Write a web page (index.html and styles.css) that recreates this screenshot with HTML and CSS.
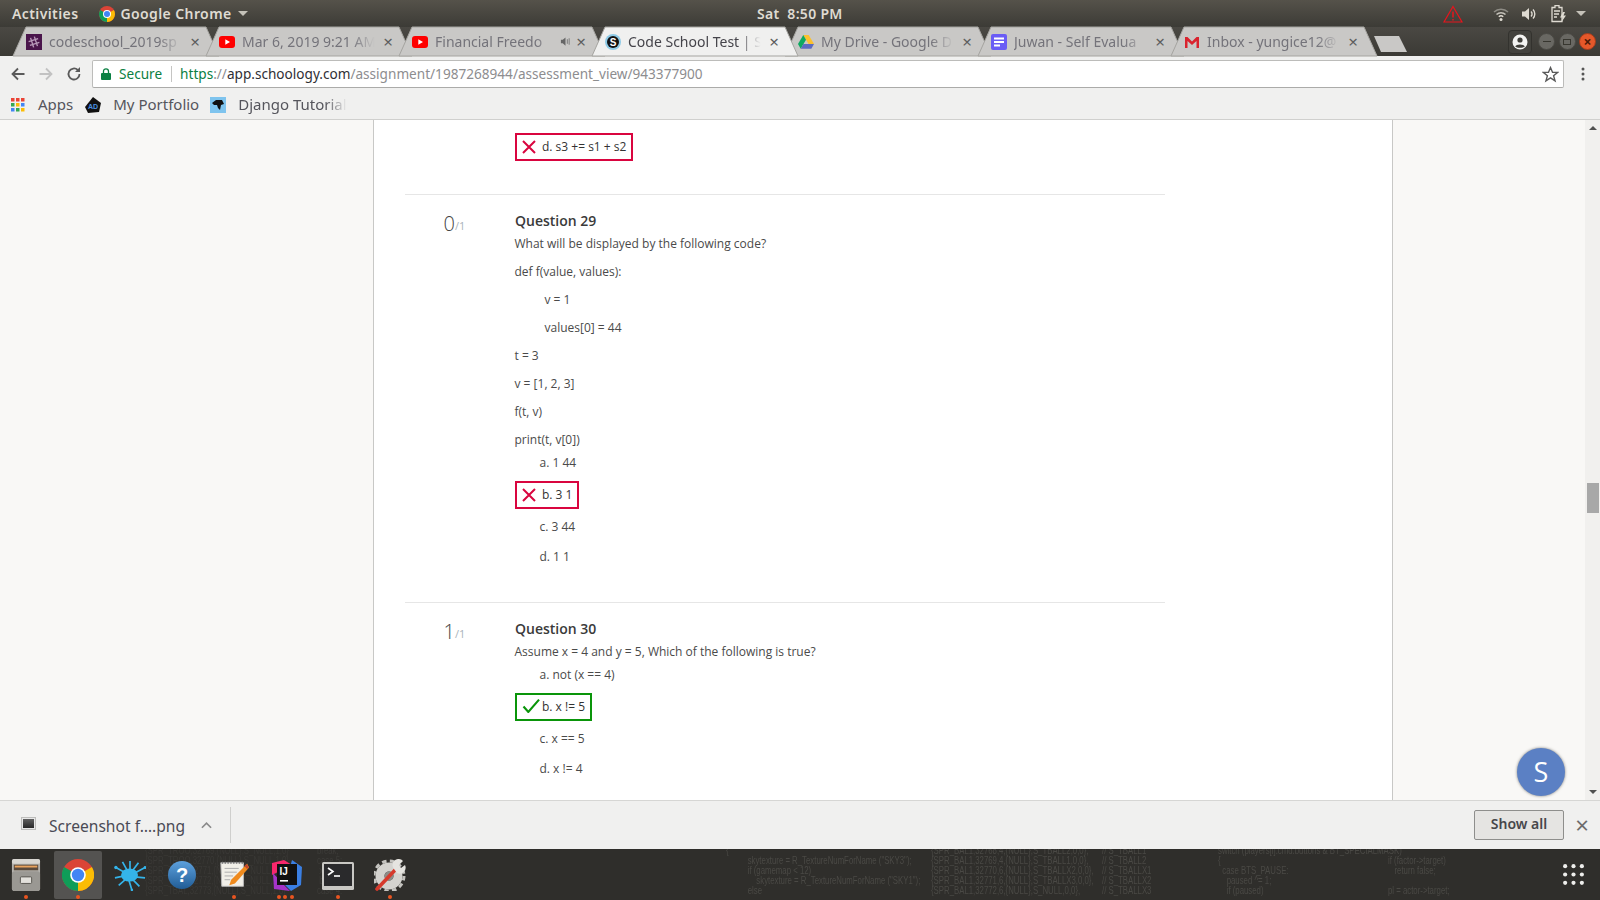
FILE: index.html
```html
<!DOCTYPE html>
<html lang="en">
<head>
<meta charset="utf-8">
<title>Code School Test | Schoology</title>
<link rel="stylesheet" href="styles.css">
</head>
<body>
<div class="screen">

<header class="topbar">
  <div class="top-left">
    <span class="top-label activities">Activities</span>
    <svg class="ico16" viewBox="0 0 16 16"><circle cx="8" cy="8" r="8" fill="#db4437"/><path d="M8 8 14.9 4A8 8 0 0 1 8 16Z" fill="#fbbc05"/><path d="M8 8 8 16A8 8 0 0 1 1.1 4Z" fill="#0f9d58"/><circle cx="8" cy="8" r="4" fill="#fff"/><circle cx="8" cy="8" r="3" fill="#4285f4"/></svg>
    <span class="top-label">Google Chrome</span>
    <span class="caret"></span>
  </div>
  <div class="top-clock top-label">Sat&nbsp; 8:50 PM</div>
  <div class="top-right">
    <svg class="warn" viewBox="0 0 20 18"><path d="M10 1.5 19 17H1Z" fill="none" stroke="#e8141c" stroke-width="1.2"/><path d="M10 6.5V12.5M10 14V15.5" stroke="#e8141c" stroke-width="1.5"/></svg>
    <svg class="wifi" viewBox="0 0 16 16"><path d="M1 6a10 10 0 0 1 14 0" fill="none" stroke="#8e8c85" stroke-width="1.5"/><path d="M3.5 8.5a6.5 6.5 0 0 1 9 0" fill="none" stroke="#c5c2b9" stroke-width="1.5"/><path d="M5.8 10.8a3.2 3.2 0 0 1 4.4 0" fill="none" stroke="#dfdbd2" stroke-width="1.5"/><circle cx="8" cy="13.5" r="1.5" fill="#dfdbd2"/></svg>
    <svg class="vol" viewBox="0 0 16 16"><path d="M1 5.5H4L8 2V14L4 10.5H1Z" fill="#dfdbd2"/><path d="M10 5.5a3.5 3.5 0 0 1 0 5M12 3.5a6.5 6.5 0 0 1 0 9" fill="none" stroke="#dfdbd2" stroke-width="1.4"/></svg>
    <svg class="batt" viewBox="0 0 16 18"><path d="M4 .5H8V2.500H11V16.500H1V2.500H4Z" fill="none" stroke="#dfdbd2" stroke-width="1.3"/><path d="M3 6H9M3 9H8M3 12H6" stroke="#dfdbd2" stroke-width="1.3"/><path d="M12 7 9 12.500H11.500L10.500 17 15 10.500H12.500L14 7Z" fill="#dfdbd2"/></svg>
    <span class="caret"></span>
  </div>
</header>

<nav class="tabstrip">
  <div class="tabs">
    <div class="tab">
      <svg class="tab-shape" viewBox="0 0 206 29"><path d="M0 29 13 0H193L206 29Z"/></svg>
      <svg class="fav" viewBox="0 0 16 16"><rect width="16" height="16" fill="#4a154b"/><g transform="rotate(-18 8 8)"><path d="M6 3V13M10 3V13M3 6H13M3 10H13" stroke="#b99aba" stroke-width="1.4"/></g></svg>
      <span class="tab-title">codeschool_2019sp</span>
      <span class="tab-x">×</span>
    </div>
    <div class="tab">
      <svg class="tab-shape" viewBox="0 0 206 29"><path d="M0 29 13 0H193L206 29Z"/></svg>
      <svg class="fav" viewBox="0 0 16 16"><rect y="2" width="16" height="12" rx="3" fill="#f00"/><path d="M6.300 5.300 11 8 6.300 10.700Z" fill="#fff"/></svg>
      <span class="tab-title">Mar 6, 2019 9:21 AM</span>
      <span class="tab-x">×</span>
    </div>
    <div class="tab">
      <svg class="tab-shape" viewBox="0 0 206 29"><path d="M0 29 13 0H193L206 29Z"/></svg>
      <svg class="fav" viewBox="0 0 16 16"><rect y="2" width="16" height="12" rx="3" fill="#f00"/><path d="M6.300 5.300 11 8 6.300 10.700Z" fill="#fff"/></svg>
      <span class="tab-title">Financial Freedo</span>
      <svg class="tab-speaker" viewBox="0 0 12 12"><path d="M1 4H3L6 1.500V10.500L3 8H1Z" fill="#666"/><path d="M8 3.500V8.500M10 2.500V9.500" stroke="#777" stroke-width="1"/></svg>
      <span class="tab-x">×</span>
    </div>
    <div class="tab tab-active">
      <svg class="tab-shape" viewBox="0 0 206 29"><path d="M0 29 13 0H193L206 29Z"/></svg>
      <svg class="fav" viewBox="0 0 16 16"><circle cx="8" cy="8" r="8" fill="#8ecae6"/><circle cx="8" cy="8" r="6" fill="#111"/><text x="8" y="11.500" class="fav-s">S</text></svg>
      <span class="tab-title">Code School Test | S</span>
      <span class="tab-x">×</span>
    </div>
    <div class="tab">
      <svg class="tab-shape" viewBox="0 0 206 29"><path d="M0 29 13 0H193L206 29Z"/></svg>
      <svg class="fav" viewBox="0 0 16 16"><path d="M5.300 1H10.700L16 10H10.600Z" fill="#fbc02d"/><path d="M5.300 1 0 10 2.700 14.700 8 5.700Z" fill="#0da960"/><path d="M2.700 14.700H13.300L16 10H5.400Z" fill="#5c6bc0"/></svg>
      <span class="tab-title">My Drive - Google D</span>
      <span class="tab-x">×</span>
    </div>
    <div class="tab">
      <svg class="tab-shape" viewBox="0 0 206 29"><path d="M0 29 13 0H193L206 29Z"/></svg>
      <svg class="fav" viewBox="0 0 16 16"><rect width="16" height="16" rx="2" fill="#6a5cf5"/><path d="M3 4.500H13M3 8H13M3 11.500H9" stroke="#fff" stroke-width="1.800"/></svg>
      <span class="tab-title">Juwan - Self Evalua</span>
      <span class="tab-x">×</span>
    </div>
    <div class="tab">
      <svg class="tab-shape" viewBox="0 0 206 29"><path d="M0 29 13 0H193L206 29Z"/></svg>
      <svg class="fav" viewBox="0 0 16 16"><path d="M1 3H3.500L8 7.500 12.500 3H15V14H12.500V7L8 11 3.500 7V14H1Z" fill="#d9232e"/></svg>
      <span class="tab-title">Inbox - yungice12@</span>
      <span class="tab-x">×</span>
    </div>
    <svg class="newtab" viewBox="0 0 33 16"><path d="M0 0H25L33 16H7Z" fill="#c9c8c6"/></svg>
  </div>
  <div class="win-controls">
    <div class="account"><svg viewBox="0 0 16 16"><circle cx="8" cy="8" r="7.500" fill="#f4f4f2"/><circle cx="8" cy="6" r="2.600" fill="#3f3e39"/><path d="M3.200 12.500C4 9.800 12 9.800 12.800 12.500 11 14.300 5 14.300 3.200 12.500Z" fill="#3f3e39"/></svg></div>
    <span class="winbtn"><i class="win-min"></i></span>
    <span class="winbtn"><i class="win-max"></i></span>
    <span class="winbtn winbtn-close">×</span>
  </div>
</nav>

<section class="toolbar">
  <svg class="tool" viewBox="0 0 16 16"><path d="M14.500 8H2.500M8 2.500 2.500 8 8 13.500" fill="none" stroke="#5a5a5a" stroke-width="1.800"/></svg>
  <svg class="tool" viewBox="0 0 16 16"><path d="M1.500 8H13.500M8 2.500 13.500 8 8 13.500" fill="none" stroke="#c2c2c2" stroke-width="1.800"/></svg>
  <svg class="tool" viewBox="0 0 16 16"><path d="M13.500 8A5.500 5.500 0 1 1 11.800 4" fill="none" stroke="#5a5a5a" stroke-width="1.800"/><path d="M14 1V6H9Z" fill="#5a5a5a"/></svg>
  <div class="omnibox">
    <svg class="lock" viewBox="0 0 10 12"><path d="M2.500 5V3.300a2.500 2.500 0 0 1 5 0V5" fill="none" stroke="#0b8043" stroke-width="1.300"/><rect y="5" width="10" height="7" rx="1" fill="#0b8043"/></svg>
    <span class="secure">Secure</span>
    <span class="omni-sep"></span>
    <span class="url"><span class="url-https">https</span><span class="url-dim">://</span><span class="url-host">app.schoology.com</span><span class="url-dim">/assignment/1987268944/assessment_view/943377900</span></span>
    <svg class="star" viewBox="0 0 16 16"><path d="M8 1.500 9.900 6H14.800L10.900 9.100 12.300 14 8 11.200 3.700 14 5.100 9.100 1.200 6H6.100Z" fill="none" stroke="#5a5a5a" stroke-width="1.300"/></svg>
  </div>
  <svg class="menu" viewBox="0 0 4 16"><circle cx="2" cy="3" r="1.500"/><circle cx="2" cy="8" r="1.500"/><circle cx="2" cy="13" r="1.500"/></svg>
</section>

<section class="bookmarks">
  <svg class="apps" viewBox="0 0 14 14"><rect width="3.500" height="3.500" fill="#ea4335"/><rect x="5" width="3.500" height="3.500" fill="#ea4335"/><rect x="10" width="3.500" height="3.500" fill="#ea4335"/><rect y="5" width="3.500" height="3.500" fill="#34a853"/><rect x="5" y="5" width="3.500" height="3.500" fill="#fbbc05"/><rect x="10" y="5" width="3.500" height="3.500" fill="#4285f4"/><rect y="10" width="3.500" height="3.500" fill="#4285f4"/><rect x="5" y="10" width="3.500" height="3.500" fill="#34a853"/><rect x="10" y="10" width="3.500" height="3.500" fill="#fbbc05"/></svg>
  <span class="bm-text bm-apps">Apps</span>
  <svg class="bm-ico" viewBox="0 0 16 16"><path d="M8 0 16 6 14 15 3 16 0 10Z" fill="#111"/><text x="3" y="12" class="bm-ad">AD</text></svg>
  <span class="bm-text bm-port">My Portfolio</span>
  <svg class="bm-ico" viewBox="0 0 16 16"><rect width="16" height="16" fill="#7fc4ee"/><path d="M2 6 6 3H12L14 7 11 8 10 13 8 11 7 8 4 8Z" fill="#111"/></svg>
  <span class="bm-text bm-django">Django Tutorial</span>
</section>

<main class="viewport">
  <div class="gutter"></div>
  <div class="page">
    <article class="question question-head">
      <div class="score-col"></div>
      <div class="q-body">
        <div class="opt-box opt-wrong">
          <svg class="mark" viewBox="0 0 14 14"><path d="M1 1 13 13M13 1 1 13" stroke="#d9053f" stroke-width="2" fill="none"/></svg>
          <span>d. s3 += s1 + s2</span>
        </div>
      </div>
    </article>
    <article class="question">
      <div class="score-col"><span class="score">0</span><span class="score-of">/1</span></div>
      <div class="q-body">
        <h2 class="q-title">Question 29</h2>
        <p class="q-line">What will be displayed by the following code?</p>
        <p class="q-line">def f(value, values):</p>
        <p class="q-line q-indent">v = 1</p>
        <p class="q-line q-indent">values[0] = 44</p>
        <p class="q-line">t = 3</p>
        <p class="q-line">v = [1, 2, 3]</p>
        <p class="q-line">f(t, v)</p>
        <p class="q-line">print(t, v[0])</p>
        <div class="opt">a. 1 44</div>
        <div class="opt-box opt-wrong">
          <svg class="mark" viewBox="0 0 14 14"><path d="M1 1 13 13M13 1 1 13" stroke="#d9053f" stroke-width="2" fill="none"/></svg>
          <span>b. 3 1</span>
        </div>
        <div class="opt opt-after">c. 3 44</div>
        <div class="opt opt-last">d. 1 1</div>
      </div>
    </article>
    <article class="question">
      <div class="score-col"><span class="score">1</span><span class="score-of">/1</span></div>
      <div class="q-body">
        <h2 class="q-title">Question 30</h2>
        <p class="q-line">Assume x = 4 and y = 5, Which of the following is true?</p>
        <div class="opt">a. not (x == 4)</div>
        <div class="opt-box opt-right">
          <svg class="mark" viewBox="0 0 16 14"><path d="M1 8 5.500 13 15.500 1.500" stroke="#0a950a" stroke-width="2" fill="none"/></svg>
          <span>b. x != 5</span>
        </div>
        <div class="opt opt-after">c. x == 5</div>
        <div class="opt opt-last">d. x != 4</div>
      </div>
    </article>
  </div>
  <div class="gutter gutter-right"></div>
  <div class="scrollbar">
    <span class="arrow-up"></span>
    <span class="thumb"></span>
    <span class="arrow-down"></span>
  </div>
  <div class="avatar">S</div>
</main>

<section class="downloads">
  <div class="dl-item">
    <span class="dl-icon"></span>
    <span class="dl-name">Screenshot f….png</span>
    <svg class="dl-chev" viewBox="0 0 12 8"><path d="M1 7 6 2 11 7" fill="none" stroke="#8a8a8a" stroke-width="1.800"/></svg>
  </div>
  <button class="show-all">Show all</button>
  <span class="dl-close">×</span>
</section>

<footer class="dock">
  <div class="wallpaper">
    <div class="wp-col wp-c1"><span class="wp-text">{SPR_TROO,32769,{NULL},S_NULL,1,0}<br>{SPR_TROO,32770,{NULL},S_NULL,1,0}<br>{SPR_TBAL,32771,{NULL},S_NULL,1,0}<br>{SPR_TBAL,32772,{NULL},S_NULL,1,0}<br>{SPR_TBAL,32773,{NULL},S_NULL,1,0}</span></div>
    <div class="wp-col wp-c2"><span class="wp-text">break;<br>case 5:<br>&nbsp;x = G;<br>&nbsp;break;<br>case 4:</span></div>
    <div class="wp-col wp-c3"><span class="wp-text">{<br>&nbsp;&nbsp;&nbsp;&nbsp;&nbsp;&nbsp;&nbsp;&nbsp;&nbsp;&nbsp;skytexture = R_TextureNumForName ("SKY3");<br>&nbsp;&nbsp;&nbsp;&nbsp;&nbsp;&nbsp;&nbsp;&nbsp;&nbsp;&nbsp;if (gamemap &lt; 12)<br>&nbsp;&nbsp;&nbsp;&nbsp;&nbsp;&nbsp;&nbsp;&nbsp;&nbsp;&nbsp;&nbsp;&nbsp;&nbsp;&nbsp;skytexture = R_TextureNumForName ("SKY1");<br>&nbsp;&nbsp;&nbsp;&nbsp;&nbsp;&nbsp;&nbsp;&nbsp;&nbsp;&nbsp;else</span></div>
    <div class="wp-col wp-c4"><span class="wp-text">{SPR_BAL1,32768,4,{NULL},S_TBALL2,0,0},<br>{SPR_BAL1,32769,4,{NULL},S_TBALL1,0,0},<br>{SPR_BAL1,32770,6,{NULL},S_TBALLX2,0,0},<br>{SPR_BAL1,32771,6,{NULL},S_TBALLX3,0,0},<br>{SPR_BAL1,32772,6,{NULL},S_NULL,0,0},</span></div>
    <div class="wp-col wp-c5"><span class="wp-text">// S_TBALL1<br>// S_TBALL2<br>// S_TBALLX1<br>// S_TBALLX2<br>// S_TBALLX3</span></div>
    <div class="wp-col wp-c6"><span class="wp-text">switch (players[i].cmd.buttons &amp; BT_SPECIALMASK)<br>{<br>&nbsp;&nbsp;case BTS_PAUSE:<br>&nbsp;&nbsp;&nbsp;&nbsp;paused ^= 1;<br>&nbsp;&nbsp;&nbsp;&nbsp;if (paused)</span></div>
    <div class="wp-col wp-c7"><span class="wp-text"><br>if (factor-&gt;target)<br>&nbsp;&nbsp;&nbsp;return false;<br><br>pl = actor-&gt;target;</span></div>
  </div>
  <div class="slot">
    <svg class="app app-files" viewBox="0 0 32 36"><rect x="1" y="1" width="30" height="34" rx="3" fill="#b5b3ae"/><rect x="1" y="1" width="30" height="5" rx="2" fill="#d8d6d1"/><rect x="3" y="7" width="26" height="6" fill="#5a4a3c"/><rect x="4" y="8" width="24" height="2" fill="#e9a35e"/><rect x="1" y="14" width="30" height="21" rx="3" fill="#9a9893"/><rect x="10" y="20" width="12" height="7" rx="1" fill="#e2e0db" stroke="#55534e"/></svg>
    <i class="run-dot"></i>
  </div>
  <div class="slot slot-on">
    <svg class="app" viewBox="0 0 32 32"><circle cx="16" cy="16" r="16" fill="#db4437"/><path d="M16 16 29.900 8A16 16 0 0 1 16 32Z" fill="#fbbc05"/><path d="M16 16V32A16 16 0 0 1 2.100 8Z" fill="#0f9d58"/><circle cx="16" cy="16" r="7.800" fill="#fff"/><circle cx="16" cy="16" r="6.200" fill="#4285f4"/></svg>
    <i class="run-dot"></i>
  </div>
  <div class="slot">
    <svg class="app" viewBox="0 0 34 34"><path d="M17 12V2M20 12 26 4M22 15 33 9M22 19 33 20M20 22 27 29M16 23 19 33M12 22 5 28M11 18 1 20M11 14 2 9M14 12 9 3" stroke="#34b4ea" stroke-width="1.800"/><circle cx="2" cy="9" r="1.800" fill="#34b4ea"/><circle cx="19" cy="33" r="1.300" fill="#34b4ea"/><circle cx="33" cy="9" r="1.500" fill="#34b4ea"/><ellipse cx="16.500" cy="17" rx="9" ry="7" fill="#34b4ea"/></svg>
  </div>
  <div class="slot">
    <svg class="app app-help" viewBox="0 0 28 28"><defs><linearGradient id="helpg" x1="0" y1="0" x2="0" y2="1"><stop offset="0" stop-color="#5da0dc"/><stop offset="1" stop-color="#215d96"/></linearGradient></defs><circle cx="14" cy="14" r="14" fill="url(#helpg)"/><text x="14" y="21" class="help-q">?</text></svg>
  </div>
  <div class="slot">
    <svg class="app" viewBox="0 0 34 32"><path d="M3 3H27V28H4Z" fill="#f1efe8" stroke="#bbb"/><path d="M4 3H27" stroke="#777" stroke-width="2" stroke-dasharray="1.500 1.500"/><path d="M7 9H22M7 13H20M7 17H16M7 21H13" stroke="#aaa"/><path d="M31 4 14 21 12 27 18 25 33 8Z" fill="#ef8a1d"/><path d="M29 5.500 32 8.500" stroke="#c2472d" stroke-width="3"/></svg>
    <i class="run-dot"></i>
  </div>
  <div class="slot">
    <svg class="app" viewBox="0 0 32 32"><path d="M2 4 14 1 22 6 2 16Z" fill="#f7276c"/><path d="M22 1 32 8 31 26 21 32 15 26Z" fill="#3a7fe3"/><path d="M3 14 14 26 20 32 4 30Z" fill="#a433c9"/><rect x="7" y="5" width="20" height="21" fill="#111"/><text x="9.500" y="16" class="ij-t">IJ</text><rect x="10" y="21" width="8" height="1.600" fill="#fff"/></svg>
    <i class="run-dot run-triple"></i>
  </div>
  <div class="slot">
    <svg class="app app-term" viewBox="0 0 32 28"><rect width="32" height="28" rx="1.500" fill="#c9c8c4"/><rect x="2" y="2" width="28" height="22" fill="#2a2a2c"/><path d="M6 6 11 9.500 6 13" fill="none" stroke="#fff" stroke-width="1.600"/><path d="M12 14H18" stroke="#fff" stroke-width="1.600"/></svg>
    <i class="run-dot"></i>
  </div>
  <div class="slot">
    <svg class="app" viewBox="0 0 32 32"><circle cx="15" cy="17" r="9" fill="none" stroke="#d4d3cf" stroke-width="9"/><circle cx="15" cy="17" r="15" fill="none" stroke="#c4c3bf" stroke-width="3" stroke-dasharray="4.500 3.400"/><circle cx="15" cy="17" r="4.500" fill="#8d8c88"/><path d="M3 30 23 9" stroke="#d63a2c" stroke-width="3.600" stroke-linecap="round"/><path d="M20 10A6 6 0 0 1 29 2L25 6 27 9 31 6A6 6 0 0 1 23 14Z" fill="#e5e4e0"/></svg>
    <i class="run-dot"></i>
  </div>
  <svg class="app-grid" viewBox="0 0 22 22"><g fill="#eeeeec"><circle cx="3" cy="3" r="2"/><circle cx="11" cy="3" r="2"/><circle cx="19" cy="3" r="2"/><circle cx="3" cy="11" r="2"/><circle cx="11" cy="11" r="2"/><circle cx="19" cy="11" r="2"/><circle cx="3" cy="19" r="2"/><circle cx="11" cy="19" r="2"/><circle cx="19" cy="19" r="2"/></g></svg>
</footer>

</div>
</body>
</html>
```
FILE: styles.css
```css
* { box-sizing: border-box; }
html, body { margin: 0; padding: 0; }
body { width: 1600px; height: 900px; overflow: hidden; font-family: "Noto Sans", sans-serif; }
.screen { display: flex; flex-direction: column; width: 1600px; height: 900px; background: #f0f0ef; }

/* top bar */
.topbar { position: relative; flex: 0 0 27px; display: flex; align-items: center; justify-content: space-between; background: linear-gradient(#55524a, #3c3b36); }
.top-label { font-size: 14px; font-weight: 600; color: #dfdbd2; letter-spacing: .4px; }
.top-left { display: flex; align-items: center; padding-left: 12px; }
.activities { margin-right: 21px; }
.ico16 { width: 16px; height: 16px; margin-right: 5px; }
.caret { width: 0; height: 0; margin-left: 6px; border-left: 5px solid transparent; border-right: 5px solid transparent; border-top: 5px solid #c5c2b9; }
.top-clock { position: absolute; left: 757px; top: 4px; letter-spacing: .3px; }
.top-right { display: flex; align-items: center; padding-right: 14px; }
.warn { width: 20px; height: 18px; margin-right: 30px; }
.wifi { width: 16px; height: 16px; margin-right: 12px; }
.vol { width: 16px; height: 16px; margin-right: 14px; }
.batt { width: 16px; height: 18px; margin-right: 3px; }

/* tabs */
.tabstrip { flex: 0 0 29px; display: flex; justify-content: space-between; background: linear-gradient(#4a4843, #3b3a35); }
.tabs { display: flex; padding-left: 13px; }
.tab { position: relative; width: 206px; height: 29px; margin-right: -13px; display: flex; align-items: center; padding: 0 17px 0 13px; }
.tab-shape { position: absolute; left: 0; top: 0; width: 206px; height: 29px; overflow: visible; }
.tab-shape path { fill: #c9c8c6; stroke: #a5a4a0; stroke-width: 1; }
.tab-active { z-index: 2; }
.tab-active .tab-shape path { fill: #f0f0ef; stroke: #a5a4a0; }
.fav { position: relative; width: 16px; height: 16px; flex: none; }
.fav-s { font: 700 10px "Liberation Sans", sans-serif; fill: #fff; text-anchor: middle; }
.tab-title { position: relative; flex: 1; min-width: 0; margin-left: 7px; font-size: 14px; color: #74737a; white-space: nowrap; overflow: hidden; -webkit-mask-image: linear-gradient(to right, #000 82%, transparent 99%); mask-image: linear-gradient(to right, #000 82%, transparent 99%); }
.tab-active .tab-title { color: #45444a; }
.tab-speaker { position: relative; width: 11px; height: 11px; flex: none; margin-left: 2px; margin-right: -2px; }
.tab-x { position: relative; flex: none; width: 14px; margin-left: 5px; text-align: center; font-size: 17px; line-height: 17px; color: #5e5e5e; }
.newtab { width: 33px; height: 16px; margin: 9px 0 0 10px; }
.win-controls { display: flex; align-items: center; padding-right: 4px; }
.account { width: 24px; height: 24px; margin-right: 3px; display: flex; align-items: center; justify-content: center; border: 1px solid #33322e; border-radius: 4px; background: #43423d; }
.account svg { width: 16px; height: 16px; }
.winbtn { width: 17px; height: 17px; margin-left: 3.500px; border-radius: 50%; background: #696863; border: 1px solid #4a4944; display: flex; align-items: center; justify-content: center; }
.win-min { width: 8px; height: 1px; background: #37362f; }
.win-max { width: 8px; height: 6px; border: 1px solid #37362f; }
.winbtn-close { background: #e5582a; border-color: #a33d1d; color: #4a1b08; font-size: 14px; line-height: 14px; font-weight: 700; }

/* toolbar */
.toolbar { flex: 0 0 35px; display: flex; align-items: center; background: #f0f0ef; padding: 1px 0 0 10px; }
.tool { width: 16px; height: 16px; margin-right: 12px; flex: none; }
.omnibox { flex: none; width: 1472px; height: 28px; margin-left: -2px; display: flex; align-items: center; padding: 0 4px 0 8px; background: #fff; border: 1px solid #bcbcba; border-bottom-color: #ababa9; border-radius: 2px; }
.lock { width: 10px; height: 12px; flex: none; }
.secure { margin-left: 8px; padding-bottom: 2px; font-size: 13.600px; color: #0b8043; }
.omni-sep { width: 1px; height: 16px; margin: 0 8px 0 9px; background: #c5c5c3; }
.url { flex: 1; padding-bottom: 2px; font-size: 13.600px; color: #8d8d8f; white-space: nowrap; }
.url-https { color: #0b8043; }
.url-dim { color: #8d8d8f; }
.url-host { color: #2f2f35; }
.star { width: 17px; height: 17px; flex: none; }
.menu { width: 4px; height: 16px; margin-left: 17px; fill: #555; flex: none; }

/* bookmarks */
.bookmarks { flex: 0 0 29px; display: flex; align-items: center; background: #f0f0ef; border-bottom: 1px solid #d0d0ce; padding-left: 11px; }
.apps { width: 14px; height: 14px; flex: none; }
.bm-ico { width: 16px; height: 16px; flex: none; }
.bm-ad { font: 700 7px "Liberation Sans", sans-serif; fill: #4a90e2; }
.bm-text { padding-bottom: 2px; font-size: 15px; color: #55555c; white-space: nowrap; }
.bm-apps { margin: 0 12px 0 13px; }
.bm-port { margin: 0 11px 0 12px; }
.bm-django { margin-left: 12px; -webkit-mask-image: linear-gradient(to right, #000 80%, transparent 100%); mask-image: linear-gradient(to right, #000 80%, transparent 100%); }

/* page */
.viewport { position: relative; flex: 0 0 680px; display: flex; overflow: hidden; background: #f9f8f6; }
.gutter { width: 373px; flex: none; }
.gutter-right { width: 192px; }
.page { width: 1020px; flex: none; background: #fff; border-left: 1px solid #c8c8c6; border-right: 1px solid #c8c8c6; padding-left: 31px; font-family: "Open Sans", sans-serif; font-size: 12px; color: #4a4a4a; }
.question { width: 760px; display: flex; border-top: 1px solid #e6e6e6; padding-top: 16px; }
.question-head { border-top: 0; padding-top: 13px; height: 74px; }
.score-col { width: 110px; flex: none; padding-left: 38.500px; line-height: 22px; padding-top: 2px; }
.score { font-size: 20px; font-weight: 300; color: #444; }
.score-of { position: relative; top: -1px; font-size: 11px; color: #a9b3bb; }
.q-body { flex: 1; padding-bottom: 36px; }
.question-head .q-body { padding-bottom: 0; }
.q-title { margin: 0; font-size: 14px; line-height: 19px; font-weight: 600; color: #3a3a3a; }
.q-line { margin: 0 0 0 -.5px; line-height: 28px; }
.q-indent { padding-left: 30px; }
.opt { padding-left: 24.500px; line-height: 18px; }
.opt-after { margin-top: 9px; }
.opt-last { margin-top: 12px; }
.opt-box { display: flex; width: fit-content; height: 28px; margin-top: 9px; align-items: center; padding: 0 5px 1px 5px; border: 2px solid; color: #333; }
.question-head .opt-box { margin-top: 0; }
.opt-wrong { border-color: #d9053f; }
.opt-right { border-color: #0a950a; padding-right: 4.500px; }
.mark { width: 14px; height: 14px; flex: none; margin-right: 6px; }
.opt-right .mark { width: 18px; height: 15px; margin-right: 2px; margin-top: -3px; }

.scrollbar { width: 15px; flex: none; background: #f1f0ee; display: flex; flex-direction: column; align-items: center; justify-content: space-between; padding: 6px 0; }
.arrow-up { width: 0; height: 0; border-left: 4px solid transparent; border-right: 4px solid transparent; border-bottom: 4px solid #505050; }
.arrow-down { width: 0; height: 0; border-left: 4px solid transparent; border-right: 4px solid transparent; border-top: 4px solid #505050; }
.thumb { width: 12px; height: 30px; margin-top: 353px; margin-bottom: auto; background: #a8a8a8; }
.avatar { position: absolute; left: 1517px; top: 628px; width: 48px; height: 48px; border-radius: 50%; background: #5b80c4; box-shadow: 0 0 3px rgba(0,0,0,.5); color: #fff; font-family: "Open Sans", sans-serif; font-weight: 500; font-size: 27px; line-height: 48px; text-align: center; }

/* download bar */
.downloads { flex: 0 0 49px; display: flex; align-items: center; background: #f0f0ef; border-top: 1px solid #d6d6d4; position: relative; }
.dl-item { width: 231px; height: 36px; display: flex; align-items: center; border-right: 1px solid #cfcfcd; padding-left: 21px; margin-right: auto; }
.dl-icon { width: 15px; height: 13px; margin-top: -4px; border: 1px solid #bdbdbb; background: linear-gradient(#666, #222); box-shadow: inset 0 0 0 1px #e8e8e8; }
.dl-name { margin-left: 13px; padding-top: 1px; font-size: 15.600px; color: #4a4a55; white-space: nowrap; }
.dl-chev { width: 11px; height: 8px; margin-left: 16px; }
.show-all { width: 90px; height: 30px; padding: 0 0 2px; margin: -1px 11px 0 0; border: 1px solid #8e8e8c; border-radius: 2px; background: #e5e4e2; font-family: "Noto Sans", sans-serif; font-weight: 600; font-size: 14px; color: #47474b; }
.dl-close { width: 14px; margin-right: 11px; text-align: center; font-size: 24px; line-height: 24px; color: #6c6c6c; }

/* dock */
.dock { position: relative; flex: 1; display: flex; align-items: stretch; background: #2f2e2b; overflow: hidden; }
.wallpaper { position: absolute; left: 0; top: -3px; right: 0; bottom: 0; display: flex; font: 10px/10px "Liberation Sans", sans-serif; color: #4a4945; white-space: nowrap; filter: blur(.4px); }
.wp-col { flex: none; }
.wp-text { display: block; width: max-content; transform: scaleX(.78); transform-origin: left top; }
.wp-c1 { width: 172px; margin-left: 145px; color: #3a3936; }
.wp-c2 { width: 409px; color: #3d3c39; }
.wp-c3 { width: 205px; }
.wp-c4 { width: 171px; }
.wp-c5 { width: 116px; }
.wp-c6 { width: 170px; }
.wp-c7 { width: 150px; }
.slot { position: relative; width: 48px; height: 48px; margin: 2px 2px 0; display: flex; align-items: center; justify-content: center; border-radius: 2px; }
.slot-on { background: rgba(255,255,255,.18); }
.app { width: 32px; height: 32px; }
.app-files { width: 30px; height: 34px; }
.app-term { margin-top: 2px; }
.app-help { width: 28px; height: 28px; }
.help-q { font: 700 20px "Liberation Sans", sans-serif; fill: #fff; text-anchor: middle; }
.ij-t { font: 700 10px "Liberation Sans", sans-serif; fill: #fff; }
.run-dot { position: absolute; left: 22px; bottom: 0; width: 4px; height: 4px; border-radius: 50%; background: #e95420; }
.run-triple { left: 15px; box-shadow: 6px 0 #e95420, 13px 0 #e95420; }
.app-grid { position: absolute; left: 1562px; top: 14px; width: 23px; height: 23px; }
```
